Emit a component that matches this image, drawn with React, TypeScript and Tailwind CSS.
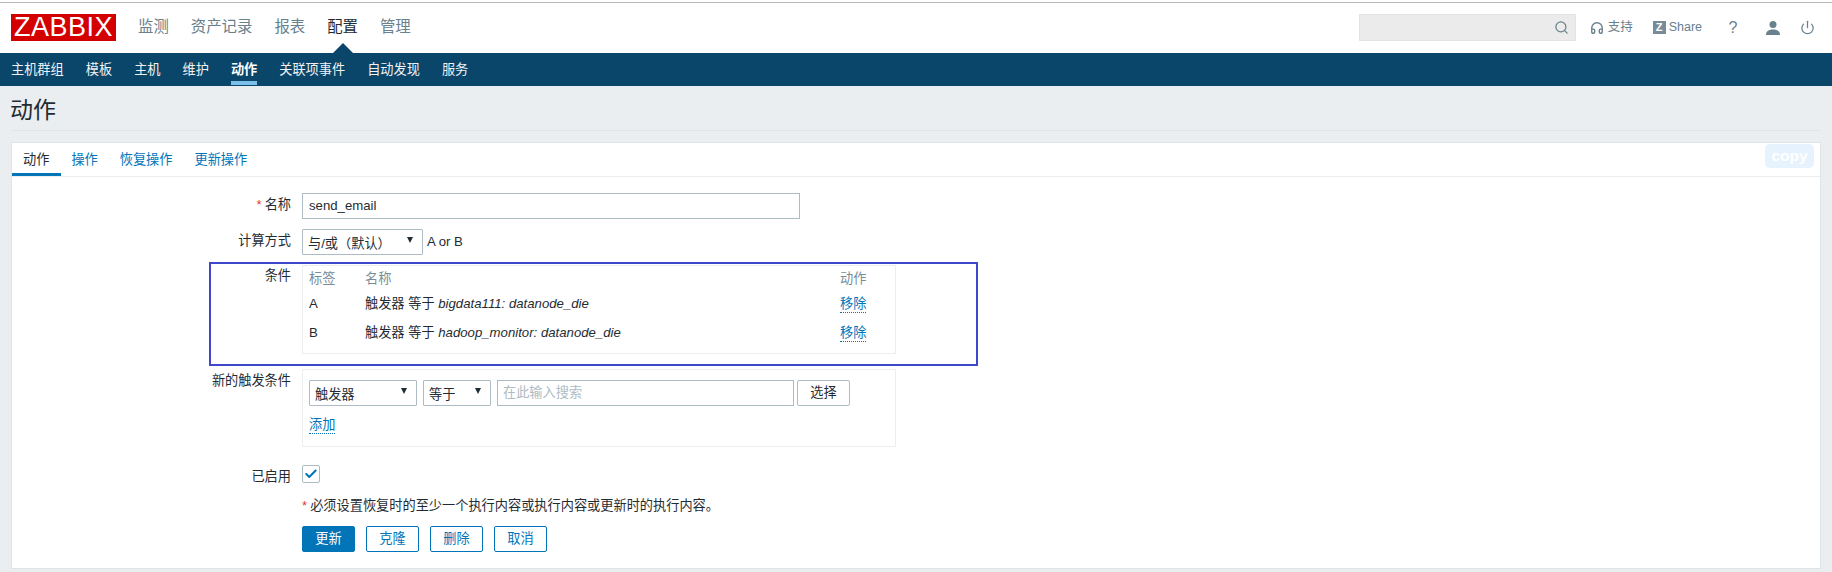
import React from "react";
import { Search, Headphones, Power, Check } from "lucide-react";

const font = { fontFamily: '"Liberation Sans", Arial, "Noto Sans CJK SC", sans-serif' };

function Arrow() {
  return <span className="w-0 h-0 border-x-[3.5px] border-x-transparent border-t-[6px] border-t-[#1f2c33]" />;
}

function FakeSelect({ label, className }: { label: string; className: string }) {
  return (
    <div className={`h-[26px] flex items-center justify-between pl-[5px] pr-[9px] border border-[#acbbc4] bg-white rounded-[1px] ${className}`}>
      <span className="mt-[4px]">{label}</span>
      <span className="flex mb-[5px]"><Arrow /></span>
    </div>
  );
}

function Row({ label, required, className, children }: { label: string; required?: boolean; className?: string; children: React.ReactNode }) {
  return (
    <div className={`flex ${className || ""}`}>
      <div className="w-[279px] shrink-0 text-right pt-[2px] leading-[20px] text-[#1f2c33]">
        {required && <span className="text-[#e33734] mr-[3px]">*</span>}
        {label}
      </div>
      <div className="ml-[11px]">{children}</div>
    </div>
  );
}

function Link({ children }: { children: React.ReactNode }) {
  return <span className="text-[#0275b8] border-b border-dotted border-[#0275b8] leading-[17px] inline-block">{children}</span>;
}

function ActionButton({ label, primary }: { label: string; primary?: boolean }) {
  return (
    <div className={`w-[53px] h-[26px] flex items-center justify-center rounded-[2px] border border-[#0275b8] ${primary ? "bg-[#0275b8] text-white" : "bg-white text-[#0275b8]"}`}>
      {label}
    </div>
  );
}

export default function App() {
  const menu = ["监测", "资产记录", "报表", "配置", "管理"];
  const sub = ["主机群组", "模板", "主机", "维护", "动作", "关联项事件", "自动发现", "服务"];
  const tabs = ["动作", "操作", "恢复操作", "更新操作"];

  return (
    <div style={font} className="h-[572px] w-[1832px] overflow-hidden bg-[#ebeef0] text-[13.2px] text-[#1f2c33]">
      {/* Top bar */}
      <div className="h-[2px] bg-white" />
      <div className="h-px bg-[#b8b8b8]" />
      <header className="h-[50px] bg-white flex items-start pl-[11px] pr-[16px]">
        <div className="mt-[11px] w-[105px] h-[27px] bg-[#d40000] text-white text-[27px] leading-[27px] text-center tracking-[0.5px]">ZABBIX</div>
        <nav className="ml-[22px] mt-[13px] flex gap-[22px] text-[15.4px] leading-[22px] text-[#69808d]">
          {menu.map((m) => (
            <div key={m} className={`relative ${m === "配置" ? "text-[#1f2c33]" : ""}`}>
              {m}
              {m === "配置" && (
                <span className="absolute left-1/2 -translate-x-1/2 top-[27px] w-0 h-0 border-x-[10px] border-x-transparent border-b-[10px] border-b-[#0a466a]" />
              )}
            </div>
          ))}
        </nav>
        <div className="ml-auto mt-[11px] flex items-center text-[#69808d]">
          <div className="w-[217px] h-[27px] bg-[#ebebeb] border border-[#e3e3e3] flex items-center justify-end pr-[6px]">
            <Search size={15} strokeWidth={2} className="text-[#69808d]" />
          </div>
          <Headphones size={14} strokeWidth={2.4} className="ml-[14px]" />
          <span className="ml-[4px] text-[12.5px]">支持</span>
          <span className="ml-[20px] w-[13px] h-[13px] bg-[#768d99] text-white text-[11px] font-bold flex items-center justify-center leading-none">Z</span>
          <span className="ml-[3px] text-[12.5px]">Share</span>
          <span className="ml-[26px] text-[16px] w-[10px] text-center">?</span>
          <svg className="ml-[27px]" width="16" height="16" viewBox="0 0 16 16" fill="#69808d">
            <circle cx="8" cy="4.5" r="3.5" />
            <path d="M1 15c0-4 3-5.500 7-5.500s7 1.500 7 5.500z" />
          </svg>
          <Power size={15} strokeWidth={2} className="ml-[19px] mr-[1px]" />
        </div>
      </header>

      {/* Sub navigation */}
      <div className="h-[33px] bg-[#0a466a] flex pl-[11px] gap-[22px] text-[13.2px] text-[#f2f2f2]">
        {sub.map((s) => (
          <div key={s} className={`pt-[8px] h-[32px] leading-[18px] ${s === "动作" ? "border-b-[4px] border-[#7ac0ea] font-bold text-white" : ""}`}>
            {s}
          </div>
        ))}
      </div>

      <div className="mx-[11px]">
        <div className="h-[45px] border-b border-[#e0e4e6] text-[23px] leading-[26px] pt-[11px] text-[#1f2c33]">
          <span className="-ml-px">动作</span>
        </div>

        {/* Card */}
        <div className="mt-[11px] h-[427px] w-[1810px] bg-white border border-[#dfe4e7]">
          <div className="relative h-[34px] border-b border-[#ebeef0] flex">
            {tabs.map((t, i) => (
              <div key={t} className={`pr-[12px] mr-[-2px] pt-[8px] h-[33px] leading-[18px] ${i === 0 ? "pl-[11px] text-[#1f2c33] border-b-[3px] border-[#0275b8] min-w-[49px]" : "pl-[12px] text-[#0275b8]"}`}>
                {t}
              </div>
            ))}
            <div className="absolute right-[6px] top-[1px] w-[49px] h-[24px] rounded-[5px] bg-[#e6f2fd] text-white font-bold text-[15.5px] flex items-center justify-center">copy</div>
          </div>

          {/* Form */}
          <div className="pt-[16px]">
            <Row label="名称" required>
              <div className="w-[498px] h-[26px] border border-[#acbbc4] px-[6px] flex items-center">send_email</div>
            </Row>
            <Row label="计算方式" className="mt-[10px]">
              <div className="flex items-center">
                <FakeSelect label="与/或（默认）" className="w-[121px]" />
                <span className="ml-[4px]">A or B</span>
              </div>
            </Row>

            {/* Highlighted conditions */}
            <div className="mt-[7px] ml-[197px] w-[769px] h-[104px] border-2 border-[#3f48cc] flex">
              <div className="w-[80px] shrink-0 text-right pt-[2px] leading-[20px]">条件</div>
              <div className="ml-[11px] mt-px w-[594px] h-[89px] border border-[#ebeef0] px-[6px]">
                <div className="flex h-[23px] pt-[2px] items-center text-[#768d99]">
                  <span className="w-[56px]">标签</span>
                  <span className="flex-1">名称</span>
                  <span className="w-[49px]">动作</span>
                </div>
                {[
                  ["A", "bigdata111: datanode_die"],
                  ["B", "hadoop_monitor: datanode_die"],
                ].map(([k, v]) => (
                  <div key={k} className="flex h-[29px] items-center">
                    <span className="w-[56px]">{k}</span>
                    <span className="flex-1">触发器 等于 <em>{v}</em></span>
                    <span className="w-[49px]"><Link>移除</Link></span>
                  </div>
                ))}
              </div>
            </div>

            <Row label="新的触发条件" className="mt-[3px]">
              <div className="w-[594px] h-[78px] border border-[#ebeef0] px-[6px] pt-[10px]">
                <div className="flex">
                  <FakeSelect label="触发器" className="w-[108px]" />
                  <FakeSelect label="等于" className="w-[68px] ml-[6px]" />
                  <div className="w-[297px] ml-[6px] h-[26px] border border-[#acbbc4] px-[5px] flex items-center text-[#acbbc4]">在此输入搜索</div>
                  <div className="w-[53px] ml-[3px] h-[26px] border border-[#acbbc4] rounded-[2px] flex items-center justify-center">选择</div>
                </div>
                <div className="mt-[9px]"><Link>添加</Link></div>
              </div>
            </Row>

            <Row label="已启用" className="mt-[18px]">
              <div className="w-[18px] h-[18px] border border-[#acbbc4] rounded-[2px] flex items-center justify-center">
                <Check size={14} strokeWidth={3.5} className="text-[#0275b8]" />
              </div>
            </Row>

            <div className="ml-[290px] mt-[9px] leading-[20px]">
              <span className="text-[#e33734] mr-[3px]">*</span>必须设置恢复时的至少一个执行内容或执行内容或更新时的执行内容。
            </div>
            <div className="ml-[290px] mt-[10px] flex gap-[11px]">
              <ActionButton label="更新" primary />
              <ActionButton label="克隆" />
              <ActionButton label="删除" />
              <ActionButton label="取消" />
            </div>
          </div>
        </div>
      </div>
    </div>
  );
}
